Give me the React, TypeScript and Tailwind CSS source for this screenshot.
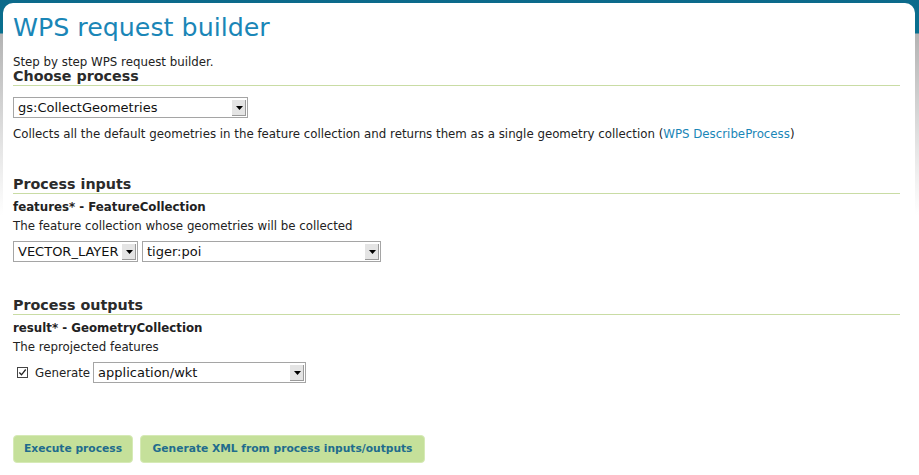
import React from "react";

function Select({ value, width }: { value: string; width: string }) {
  return (
    <div className={`flex h-[21px] ${width} items-stretch border border-[#a5a5a5] bg-white`}>
      <div className="flex flex-1 items-center overflow-hidden whitespace-nowrap pl-[4px] text-[13px] leading-none text-[#111]">{value}</div>
      <div className="m-[1px] flex w-[15px] items-center justify-center border-l border-t border-white bg-[#e4e4e4] shadow-[inset_-1px_-1px_0_#9a9a9a]">
        <svg width="7" height="4" viewBox="0 0 7 4">
          <path d="M0 0h7L3.5 4z" fill="#000" />
        </svg>
      </div>
    </div>
  );
}

function Heading({ children }: { children: React.ReactNode }) {
  return (
    <div className="border-b border-[#c9dca4] pb-[1px] text-[14.3px] font-bold leading-[15px] text-[#2b2b2b]">{children}</div>
  );
}

export default function App() {
  return (
    <div
      className="h-[475px] w-full overflow-hidden bg-[linear-gradient(to_bottom,#0c6a8b_0px,#08708f_33px,#b3b3b3_34px,#e6e6e6_150px,#ffffff_215px)] pl-[3px] pr-[4px] pt-[3px]"
      style={{ fontFamily: '"DejaVu Sans", Verdana, sans-serif' }}
    >
      <div className="h-full rounded-t-[10px] bg-white pl-[10px] pr-[15px] text-[#222]">
        <h1 className="pt-[5px] text-[25.3px] font-normal leading-[40px] text-[#1a86b7]">WPS request builder</h1>
        <div className="mt-[7px] text-[11.8px] leading-[14px]">Step by step WPS request builder.</div>
        <Heading>Choose process</Heading>
        <div className="mt-[11px]">
          <Select value="gs:CollectGeometries" width="w-[235px]" />
        </div>
        <div className="mt-[9px] text-[11.8px] leading-[14px]">
          Collects all the default geometries in the feature collection and returns them as a single geometry collection (
          <span className="text-[#1a86b7]">WPS DescribeProcess</span>)
        </div>

        <div className="mt-[36px]">
          <Heading>Process inputs</Heading>
        </div>
        <div className="mt-[6px] text-[11.8px] font-bold leading-[14px]">features* - FeatureCollection</div>
        <div className="mt-[5px] text-[11.8px] leading-[14px]">The feature collection whose geometries will be collected</div>
        <div className="mt-[8px] flex gap-[4px]">
          <Select value="VECTOR_LAYER" width="w-[125px]" />
          <Select value="tiger:poi" width="w-[239px]" />
        </div>

        <div className="mt-[36px]">
          <Heading>Process outputs</Heading>
        </div>
        <div className="mt-[6px] text-[11.8px] font-bold leading-[14px]">result* - GeometryCollection</div>
        <div className="mt-[5px] text-[11.8px] leading-[14px]">The reprojected features</div>
        <div className="mt-[8px] flex items-center">
          <svg width="11" height="11" viewBox="0 0 11 11" className="ml-[4px]">
            <rect x="0.5" y="0.5" width="10" height="10" fill="#fff" stroke="#444" />
            <path d="M2.3 5.5l2.2 2.3 4.2-5.3" fill="none" stroke="#222" strokeWidth="1.3" />
          </svg>
          <span className="ml-[7px] mr-[3px] text-[11.8px] leading-[14px]">Generate</span>
          <Select value="application/wkt" width="w-[213px]" />
        </div>

        <div className="mt-[52px] flex gap-[7px]">
          <button className="h-[28px] w-[120px] rounded-[4px] border border-[#d6eab6] bg-[#c5e09a] text-[10.7px] font-bold text-[#1f6c8d]">
            Execute process
          </button>
          <button className="h-[28px] w-[285px] rounded-[4px] border border-[#d6eab6] bg-[#c5e09a] text-[10.7px] font-bold text-[#1f6c8d]">
            Generate XML from process inputs/outputs
          </button>
        </div>
      </div>
    </div>
  );
}
